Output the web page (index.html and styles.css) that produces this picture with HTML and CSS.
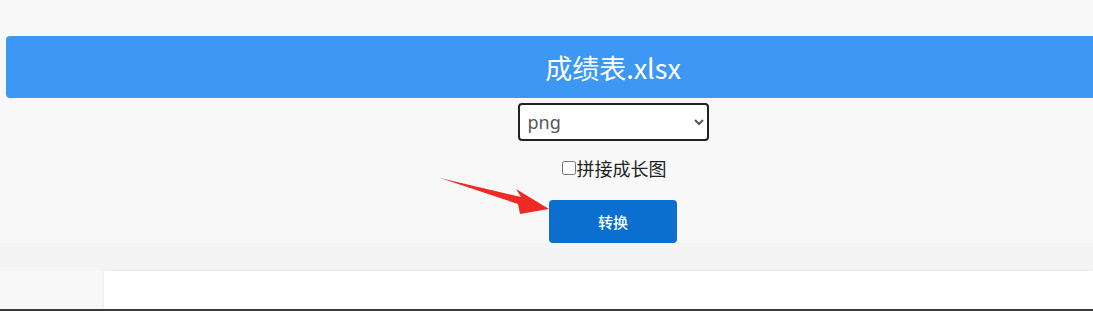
FILE: index.html
```html
<!DOCTYPE html>
<html lang="zh">
<head>
<meta charset="utf-8">
<link rel="stylesheet" href="styles.css">
</head>
<body>
<div class="page">
  <div class="top">
    <div class="title-bar">成绩表.xlsx</div>
    <div class="form">
      <select class="fmt">
        <option>png</option>
        <option>jpg</option>
      </select>
      <label class="opt"><input type="checkbox" class="chk">拼接成长图</label>
      <button class="btn">转换</button>
    </div>
  </div>
  <div class="band"></div>
  <div class="card"></div>
  <div class="edge"></div>
</div>
<svg class="arrow" width="1093" height="311" viewBox="0 0 1093 311">
  <polygon points="440,178 521,197 516,189 549,209 520,214 518,204" fill="#ee2a24"/>
</svg>
</body>
</html>
```
FILE: styles.css
```css
html, body {
  margin: 0;
  padding: 0;
  overflow: hidden;
  background: #f8f8f8;
  font-family: "Microsoft YaHei", "Noto Sans CJK SC", "Noto Sans", sans-serif;
}
.page {
  width: 1093px;
  height: 311px;
  display: flex;
  flex-direction: column;
  overflow: hidden;
}
.top {
  flex: none;
  padding-top: 36px;
  padding-left: 6px;
  width: 1220px;
  height: 243px;
  box-sizing: border-box;
}
.title-bar {
  height: 62px;
  background: #3d97f5;
  border-radius: 4px;
  color: #fff;
  font-size: 27px;
  display: flex;
  align-items: center;
  justify-content: center;
}
.form {
  display: flex;
  flex-direction: column;
  align-items: center;
  padding-top: 5px;
}
.fmt {
  width: 191px;
  height: 38px;
  border: 2px solid #222;
  border-radius: 4px;
  background: #fff;
  font-size: 18px;
  color: #555;
  font-family: "Noto Sans", sans-serif;
  padding: 0 4px;
}
.opt {
  margin-top: 15px;
  font-size: 18px;
  color: #222;
  display: flex;
  align-items: center;
  height: 24px;
  padding-left: 2px;
}
.chk {
  width: 14px;
  height: 14px;
  margin: 0 1px 0 0;
}
.btn {
  margin-top: 20px;
  width: 128px;
  height: 43px;
  border: none;
  border-radius: 4px;
  background: #0b6fd0;
  color: #fff;
  font-size: 15px;
  font-weight: 500;
  font-family: "Noto Sans CJK SC", sans-serif;
}
.band {
  height: 28px;
  background: #f4f4f4;
  flex: none;
}
.card {
  flex: 1;
  margin-left: 104px;
  background: #fff;
  box-shadow: 0 0 4px rgba(0,0,0,0.08);
}
.edge {
  height: 2px;
  background: #3a3a3a;
  flex: none;
}
.arrow {
  position: absolute;
  left: 0;
  top: 0;
  pointer-events: none;
}
```
